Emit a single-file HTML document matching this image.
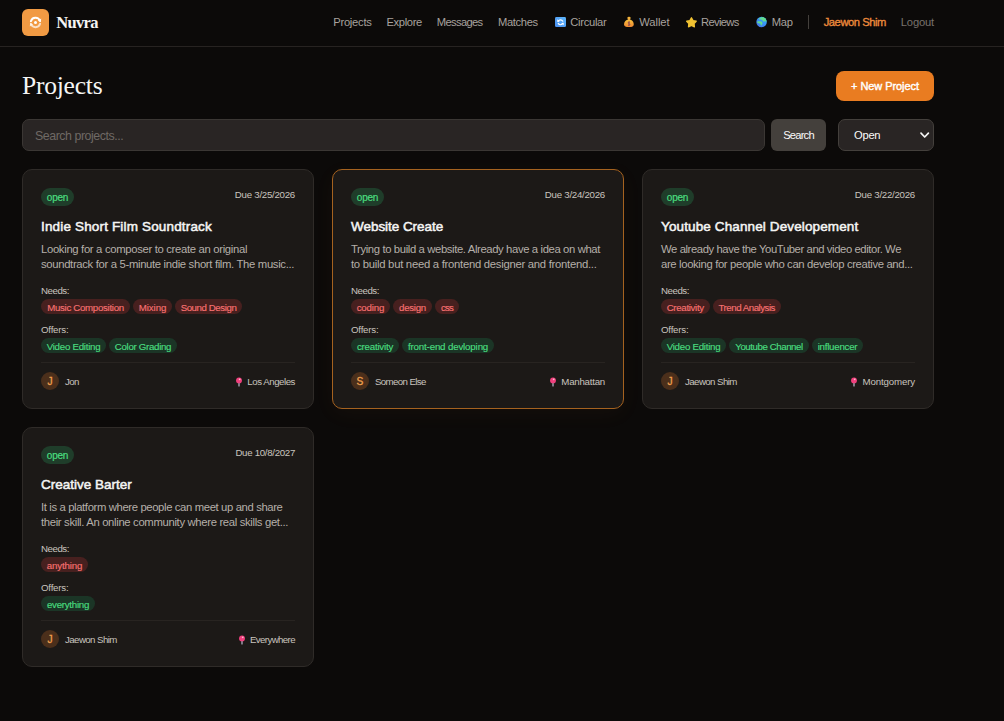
<!DOCTYPE html>
<html lang="en">
<head>
<meta charset="utf-8">
<title>Nuvra - Projects</title>
<style>
*{box-sizing:border-box;margin:0;padding:0}
html,body{width:1004px;height:721px;overflow:hidden;background:#0c0a09}
body{font-family:"Liberation Sans",sans-serif;color:#e7e5e4;position:relative;font-size:11px}
span{white-space:pre}
.hdr{position:absolute;left:0;top:0;width:1004px;height:47px;border-bottom:1px solid #272321}
.logo{position:absolute;left:22px;top:9px;width:27px;height:27px;border-radius:6px;background:#f19a43}
.logo svg{position:absolute;left:0;top:0}
.brand{position:absolute;left:56.3px;top:13.5px;font:bold 16.5px/18px "Liberation Serif",serif;color:#f5f5f4}
.nav a{position:absolute;top:14px;font-size:11.2px;line-height:16px;color:#a8a29e;text-decoration:none}
.nav svg{position:absolute}
.nav .sep{position:absolute;left:808px;top:15px;width:1px;height:14px;background:#44403c}
h1{position:absolute;left:22px;top:70.5px;font:normal 25.5px/30px "Liberation Serif",serif;color:#f5f5f4}
.newbtn{position:absolute;left:836px;top:71px;width:98px;height:30px;border-radius:8px;background:#e97c21;color:#fff;font-weight:normal;-webkit-text-stroke:.4px #fff;font-size:11px;line-height:30px;text-align:center}
.search{position:absolute;left:22px;top:119px;width:743px;height:32px;border-radius:7px;background:#292524;border:1px solid #3b3734;color:#6f6964;font-size:12.4px;line-height:33.2px;padding-left:12px}
.sbtn{position:absolute;left:771px;top:119px;width:55px;height:32px;border-radius:6px;background:#44403c;color:#fafaf9;font-size:11.2px;line-height:32px;text-align:center}
.sel{position:absolute;left:838px;top:119px;width:96px;height:32px;border-radius:7px;background:#292524;border:1px solid #44403c;color:#fafaf9;font-size:11.2px;line-height:30px;padding-left:15px}
.sel svg{position:absolute;left:80px;top:11px}
.card{position:absolute;width:292px;height:240px;border-radius:10px;background:#1c1917;border:1px solid #2f2b28}
.card.hov{border-color:#a5621f;box-shadow:0 5px 22px rgba(234,140,70,.045)}
.card>*{position:absolute}
.pill{left:18px;top:18px;width:33px;height:18px;border-radius:9px;background:#1f3d2a;color:#4ade80;font-size:10px;line-height:20.4px;text-align:center;-webkit-text-stroke:.2px #4ade80}
.due{right:18px;top:18px;font-size:9.7px;line-height:14px;color:#c9c4bf}
.ttl{left:18px;top:46.8px;font-size:13.5px;line-height:20px;font-weight:normal;-webkit-text-stroke:.5px #f5f5f4;color:#f5f5f4}
.desc{left:18px;top:72.2px;font-size:11.3px;line-height:14.75px;color:#b5afa9}
.lab{left:18px;font-size:9.7px;line-height:12px;color:#c9c4bf}
.tags{left:18px;font-size:0;white-space:nowrap}
.tag{display:inline-block;height:14.7px;border-radius:8px;margin-right:3px;font-size:9.7px;line-height:18.4px;text-align:center;vertical-align:top}
.need .tag{background:#47201f;color:#f87171;-webkit-text-stroke:.15px #f87171}
.offer .tag{background:#1b3526;color:#4ade80;-webkit-text-stroke:.15px #4ade80}
.ft{left:18px;right:18px;top:192px;height:1px;background:#282421}
.av{left:18px;top:202px;width:18px;height:18px;border-radius:9px;background:#4b2f1b;color:#f0a04e;font-size:10.2px;line-height:19.1px;text-align:center;-webkit-text-stroke:.3px #f0a04e}
.who{left:42px;top:204.6px;font-size:9.7px;line-height:14px;color:#c9c4bf}
.loc{right:18px;top:204.6px;font-size:9.7px;line-height:14px;color:#c9c4bf}
.pin{top:206.5px;width:8px;height:11px}
</style>
</head>
<body>
<div class="hdr">
  <div class="logo"><svg width="27" height="27" viewBox="0 0 27 27"><g fill="none" stroke="#fff" stroke-width="2" stroke-linecap="round"><path d="M8.9 12.3 A4.8 4.8 0 0 1 18 12"/><path d="M18.1 14.7 A4.8 4.8 0 0 1 9 15.0" opacity=".7"/></g><path d="M19.2 9.4 L18.9 13 L15.8 11.8 Z" fill="#fff"/><path d="M7.8 17.6 L8.1 14 L11.2 15.2 Z" fill="#fff" opacity=".7"/><circle cx="13.5" cy="13.5" r="1.5" fill="#fff"/></svg></div>
  <div class="brand"><span class="" style="letter-spacing:-0.705px;">Nuvra</span></div>
  <div class="nav">
    <a style="left:333.2px"><span class="" style="letter-spacing:-0.246px;">Projects</span></a>
    <a style="left:386.4px"><span class="" style="letter-spacing:-0.34px;">Explore</span></a>
    <a style="left:436.8px"><span class="" style="letter-spacing:-0.657px;">Messages</span></a>
    <a style="left:498px"><span class="" style="letter-spacing:-0.364px;">Matches</span></a>
    <svg style="left:555px;top:17px" width="11" height="11" viewBox="0 0 11 11"><defs><linearGradient id="gb" x1="0" y1="1" x2="1" y2="0"><stop offset="0" stop-color="#4a8ff0"/><stop offset="1" stop-color="#5db6fb"/></linearGradient></defs><rect x="0" y="0" width="11" height="10.1" rx="1.4" fill="url(#gb)"/><g fill="none" stroke="#fff" stroke-width="1.15" stroke-linecap="round"><path d="M3.2 4.3 A2.6 2.6 0 0 1 7.8 4.2"/><path d="M7.8 6.3 A2.6 2.6 0 0 1 3.2 6.4"/></g><path d="M2.2 2.3 L2.4 4.9 L4.8 4.2 Z" fill="#fff"/><path d="M8.8 8.3 L8.6 5.7 L6.2 6.4 Z" fill="#fff"/></svg><a style="left:570.2px"><span class="" style="letter-spacing:-0.278px;">Circular</span></a>
    <svg style="left:623px;top:16px" width="12" height="12" viewBox="0 0 12 12"><defs><linearGradient id="gm" x1="0" y1="0" x2="0" y2="1"><stop offset="0" stop-color="#f7c23c"/><stop offset="1" stop-color="#ee8532"/></linearGradient></defs><ellipse cx="6" cy="2.1" rx="1.7" ry="1.4" fill="#f5b33a"/><rect x="5" y="3" width="2" height="1.2" fill="#d98a4a"/><path d="M6 3.6 C8.5 3.6 10.7 5.6 10.7 8.2 C10.7 10.4 9.3 11.1 6 11.1 C2.7 11.1 1.1 10.4 1.1 8.2 C1.1 5.6 3.5 3.6 6 3.6 Z" fill="url(#gm)"/><path d="M6.9 6.3 C6.2 5.7 5.2 6 5.3 6.8 C5.4 7.7 6.8 7.5 6.8 8.5 C6.8 9.3 5.7 9.5 5 8.9 M6 5.4 V10" fill="none" stroke="#8a4650" stroke-width=".9"/></svg><a style="left:639.2px"><span class="" style="letter-spacing:-0.054px;">Wallet</span></a>
    <svg style="left:685px;top:16px" width="12" height="12" viewBox="0 0 12 12"><path d="M6.45 1.75 L8.07 4.53 L11.21 5.20 L9.07 7.60 L9.39 10.80 L6.45 9.50 L3.51 10.80 L3.83 7.60 L1.69 5.20 L4.83 4.53 Z" fill="#f1c232" stroke="#f1c232" stroke-width="1.3" stroke-linejoin="round"/></svg><a style="left:701px"><span class="" style="letter-spacing:-0.647px;">Reviews</span></a>
    <svg style="left:755px;top:16px" width="12" height="12" viewBox="0 0 12 12"><defs><linearGradient id="gg" x1="0" y1="1" x2="1" y2="0"><stop offset="0" stop-color="#4b6fe2"/><stop offset=".5" stop-color="#3a90f5"/><stop offset="1" stop-color="#33b5fb"/></linearGradient><clipPath id="gc"><circle cx="6.55" cy="5.95" r="5.25"/></clipPath></defs><circle cx="6.55" cy="5.95" r="5.25" fill="url(#gg)"/><g clip-path="url(#gc)" fill="#62dc8f"><path d="M3.8 2.6 C5.5 1.6 6.5 .8 8.5 .9 C10.5 1.5 11.8 3.5 11.6 5.4 C10.8 6.2 10.4 5 9.8 5 C9.4 5.4 9.2 6.4 8.6 5.8 C8.4 4.6 7 4.2 6.2 3.6 C5.2 3.4 4.4 3.6 3.8 3.2 Z"/><path d="M2.2 5.6 C3.6 5.1 5.4 5.2 6.4 5.4 C7.4 6 7.8 7 7.4 7.8 C6.8 8.4 6.8 9.4 6.2 9.8 C5.6 9.4 5.6 8.2 5.2 7.6 C4.2 7.4 2.8 7.2 2.2 6.4 Z"/></g></svg><a style="left:771.7px"><span class="" style="letter-spacing:-0.183px;">Map</span></a>
    <span class="sep"></span>
    <a style="left:823.7px;color:#ee8a3c;-webkit-text-stroke:.35px #ee8a3c"><span class="" style="letter-spacing:-0.447px;">Jaewon Shim</span></a>
    <a style="left:900.8px;color:#78716c"><span class="" style="letter-spacing:-0.164px;">Logout</span></a>
  </div>
</div>
<h1><span class="" style="letter-spacing:-0.222px;">Projects</span></h1>
<div class="newbtn"><span class="" style="letter-spacing:-0.073px;">+ New Project</span></div>
<div class="search"><span class="" style="letter-spacing:-0.46px;">Search projects...</span></div>
<div class="sbtn"><span class="" style="letter-spacing:-0.791px;">Search</span></div>
<div class="sel"><span class="" style="letter-spacing:-0.258px;">Open</span><svg width="11" height="8" viewBox="0 0 11 8"><path d="M2 2.2 L5.7 6 L9.4 2.2" fill="none" stroke="#f5f5f4" stroke-width="1.7" stroke-linecap="round" stroke-linejoin="round"/></svg></div>
<div class="card" style="left:22px;top:169px">
  <div class="pill"><span class="" style="letter-spacing:-0.2px;">open</span></div><div class="due"><span class="" style="letter-spacing:-0.264px;">Due 3/25/2026</span></div>
  <div class="ttl"><span class="" style="letter-spacing:0.159px;">Indie Short Film Soundtrack</span></div>
  <div class="desc"><span class="" style="letter-spacing:-0.326px;">Looking for a composer to create an original</span><br><span class="" style="letter-spacing:-0.332px;">soundtrack for a 5-minute indie short film. The music...</span></div>
  <div class="lab" style="top:115px"><span class="" style="letter-spacing:-0.461px;">Needs:</span></div>
  <div class="tags need" style="top:129.4px"><span class="tag" style="width:89px;letter-spacing:-0.309px">Music Composition</span><span class="tag" style="width:39px;letter-spacing:-0.07px">Mixing</span><span class="tag" style="width:67px;letter-spacing:-0.428px">Sound Design</span></div>
  <div class="lab" style="top:154px"><span class="" style="letter-spacing:-0.209px;">Offers:</span></div>
  <div class="tags offer" style="top:168.3px"><span class="tag" style="width:65px;letter-spacing:-0.252px">Video Editing</span><span class="tag" style="width:68px;letter-spacing:-0.305px">Color Grading</span></div>
  <div class="ft"></div><div class="av">J</div><div class="who"><span class="" style="letter-spacing:-0.612px;">Jon</span></div>
  <div class="pin" style="left:211.95px"><svg width="8" height="11" viewBox="0 0 8 11"><rect x="3.1" y="5.6" width="1.8" height="3.9" rx=".5" fill="#8b8493"/><circle cx="4" cy="3.4" r="2.95" fill="#ef3f7c"/><circle cx="4.7" cy="2.3" r=".9" fill="#ffc4d8" opacity=".9"/></svg></div><div class="loc"><span class="" style="letter-spacing:-0.465px;">Los Angeles</span></div>
</div>
<div class="card hov" style="left:332px;top:169px">
  <div class="pill"><span class="" style="letter-spacing:-0.2px;">open</span></div><div class="due"><span class="" style="letter-spacing:-0.264px;">Due 3/24/2026</span></div>
  <div class="ttl"><span class="" style="letter-spacing:-0.046px;">Website Create</span></div>
  <div class="desc"><span class="" style="letter-spacing:-0.382px;">Trying to build a website. Already have a idea on what</span><br><span class="" style="letter-spacing:-0.272px;">to build but need a frontend designer and frontend...</span></div>
  <div class="lab" style="top:115px"><span class="" style="letter-spacing:-0.461px;">Needs:</span></div>
  <div class="tags need" style="top:129.4px"><span class="tag" style="width:39px;letter-spacing:-0.133px">coding</span><span class="tag" style="width:39px;letter-spacing:-0.283px">design</span><span class="tag" style="width:24px;letter-spacing:-0.816px">css</span></div>
  <div class="lab" style="top:154px"><span class="" style="letter-spacing:-0.209px;">Offers:</span></div>
  <div class="tags offer" style="top:168.3px"><span class="tag" style="width:48px;letter-spacing:-0.204px">creativity</span><span class="tag" style="width:92px;letter-spacing:-0.142px">front-end devloping</span></div>
  <div class="ft"></div><div class="av">S</div><div class="who"><span class="" style="letter-spacing:-0.623px;">Someon Else</span></div>
  <div class="pin" style="left:216.20px"><svg width="8" height="11" viewBox="0 0 8 11"><rect x="3.1" y="5.6" width="1.8" height="3.9" rx=".5" fill="#8b8493"/><circle cx="4" cy="3.4" r="2.95" fill="#ef3f7c"/><circle cx="4.7" cy="2.3" r=".9" fill="#ffc4d8" opacity=".9"/></svg></div><div class="loc"><span class="" style="letter-spacing:-0.235px;">Manhattan</span></div>
</div>
<div class="card" style="left:642px;top:169px">
  <div class="pill"><span class="" style="letter-spacing:-0.2px;">open</span></div><div class="due"><span class="" style="letter-spacing:-0.264px;">Due 3/22/2026</span></div>
  <div class="ttl"><span class="" style="letter-spacing:0.122px;">Youtube Channel Developement</span></div>
  <div class="desc"><span class="" style="letter-spacing:-0.417px;">We already have the YouTuber and video editor. We</span><br><span class="" style="letter-spacing:-0.354px;">are looking for people who can develop creative and...</span></div>
  <div class="lab" style="top:115px"><span class="" style="letter-spacing:-0.461px;">Needs:</span></div>
  <div class="tags need" style="top:129.4px"><span class="tag" style="width:48.5px;letter-spacing:-0.331px">Creativity</span><span class="tag" style="width:68.5px;letter-spacing:-0.484px">Trend Analysis</span></div>
  <div class="lab" style="top:154px"><span class="" style="letter-spacing:-0.209px;">Offers:</span></div>
  <div class="tags offer" style="top:168.3px"><span class="tag" style="width:65px;letter-spacing:-0.252px">Video Editing</span><span class="tag" style="width:80px;letter-spacing:-0.435px">Youtube Channel</span><span class="tag" style="width:51px;letter-spacing:-0.235px">influencer</span></div>
  <div class="ft"></div><div class="av">J</div><div class="who"><span class="" style="letter-spacing:-0.576px;">Jaewon Shim</span></div>
  <div class="pin" style="left:207.45px"><svg width="8" height="11" viewBox="0 0 8 11"><rect x="3.1" y="5.6" width="1.8" height="3.9" rx=".5" fill="#8b8493"/><circle cx="4" cy="3.4" r="2.95" fill="#ef3f7c"/><circle cx="4.7" cy="2.3" r=".9" fill="#ffc4d8" opacity=".9"/></svg></div><div class="loc"><span class="" style="letter-spacing:-0.133px;">Montgomery</span></div>
</div>
<div class="card" style="left:22px;top:427px">
  <div class="pill"><span class="" style="letter-spacing:-0.2px;">open</span></div><div class="due"><span class="" style="letter-spacing:-0.305px;">Due 10/8/2027</span></div>
  <div class="ttl"><span class="" style="letter-spacing:-0.007px;">Creative Barter</span></div>
  <div class="desc"><span class="" style="letter-spacing:-0.374px;">It is a platform where people can meet up and share</span><br><span class="" style="letter-spacing:-0.336px;">their skill. An online community where real skills get...</span></div>
  <div class="lab" style="top:115px"><span class="" style="letter-spacing:-0.461px;">Needs:</span></div>
  <div class="tags need" style="top:129.4px"><span class="tag" style="width:47px;letter-spacing:-0.149px">anything</span></div>
  <div class="lab" style="top:154px"><span class="" style="letter-spacing:-0.209px;">Offers:</span></div>
  <div class="tags offer" style="top:168.3px"><span class="tag" style="width:54px;letter-spacing:-0.267px">everything</span></div>
  <div class="ft"></div><div class="av">J</div><div class="who"><span class="" style="letter-spacing:-0.576px;">Jaewon Shim</span></div>
  <div class="pin" style="left:214.50px"><svg width="8" height="11" viewBox="0 0 8 11"><rect x="3.1" y="5.6" width="1.8" height="3.9" rx=".5" fill="#8b8493"/><circle cx="4" cy="3.4" r="2.95" fill="#ef3f7c"/><circle cx="4.7" cy="2.3" r=".9" fill="#ffc4d8" opacity=".9"/></svg></div><div class="loc"><span class="" style="letter-spacing:-0.617px;">Everywhere</span></div>
</div>

</body>
</html>
